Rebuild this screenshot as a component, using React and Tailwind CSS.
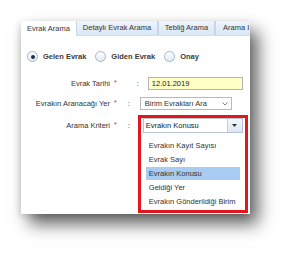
function Radio({ checked, label }) {
  return (
    <div className="flex items-center gap-[5px]">
      <span className="w-[11px] h-[11px] rounded-full border border-[#9fb6d3] bg-gradient-to-b from-white to-[#e3ebf5] flex items-center justify-center">
        {checked && <span className="w-[4px] h-[4px] rounded-full bg-[#1f2f4a]" />}
      </span>
      <span className="text-[#3a3a3a] font-semibold">{label}</span>
    </div>
  );
}

function Label({ text, colonGap }) {
  return (
    <div className="flex items-center">
      <span className="w-[89px] text-right text-[#333]">{text}</span>
      <span className="ml-[4px] text-[#e2141b] text-[7px] -mt-[3px]">*</span>
      <span className={`${colonGap} text-[#333]`}>:</span>
    </div>
  );
}

const options = [
  "Evrakın Kayıt Sayısı",
  "Evrak Sayı",
  "Evrakın Konusu",
  "Geldiği Yer",
  "Evrakın Gönderildiği Birim",
];

export default function App() {
  return (
    <div
      className="w-[294px] h-[256px] bg-white overflow-hidden pt-[21px] pl-[21px] text-[7.5px] leading-none"
      style={{ fontFamily: '"Liberation Sans", Arial, sans-serif' }}
    >
      <div className="w-[229px] h-[193px] bg-white overflow-hidden shadow-[8px_10px_16px_rgba(0,0,0,0.62),-2px_2px_6px_rgba(0,0,0,0.12)]">
        {/* Tabs */}
        <div className="flex h-[15px] whitespace-nowrap">
          <div className="w-[55px] shrink-0 bg-white flex items-center justify-center text-[#333]">
            Evrak Arama
          </div>
          <div className="w-[81px] shrink-0 bg-gradient-to-b from-[#eef4fb] to-[#dbe7f5] border-l border-[#c6d6ea] border-b border-b-[#d2deed] flex items-center justify-center text-[#333]">
            Detaylı Evrak Arama
          </div>
          <div className="w-[57px] shrink-0 bg-gradient-to-b from-[#eef4fb] to-[#dbe7f5] border-l-2 border-[#c6d6ea] border-b border-b-[#d2deed] flex items-center justify-center text-[#333]">
            Tebliğ Arama
          </div>
          <div className="w-[36px] shrink-0 overflow-hidden bg-gradient-to-b from-[#eef4fb] to-[#dbe7f5] border-l-2 border-[#c6d6ea] border-b border-b-[#d2deed] flex items-center pl-[7px] text-[#333]">
            Arama I
          </div>
        </div>

        {/* Radios */}
        <div className="flex items-center h-[11px] mt-[15px] pl-[6px] gap-[9px]">
          <Radio checked label="Gelen Evrak" />
          <Radio label="Giden Evrak" />
          <Radio label="Onay" />
        </div>

        {/* Form */}
        <div className="mt-[15px] flex flex-col">
          <div className="flex items-center h-[13px]">
            <Label text="Evrak Tarihi" colonGap="ml-[20px]" />
            <div className="ml-[9px] w-[95px] h-[13px] border border-[#b4b4b4] bg-[#ffffc6] flex items-center pl-[3px] text-[#222]">
              12.01.2019
            </div>
          </div>

          <div className="flex items-center h-[13px] mt-[7px]">
            <Label text="Evrakın Aranacağı Yer" colonGap="ml-[11px]" />
            <div className="ml-[10px] w-[92px] h-[13px] border border-[#b9b9b9] bg-white flex items-center justify-between pl-[4px] pr-[3px] text-[#333]">
              <span>Birim Evrakları Ara</span>
              <svg width="6" height="4" viewBox="0 0 6 4" fill="none" stroke="#666" strokeWidth="0.8">
                <path d="M0.5 0.5 L3 3 L5.5 0.5" />
              </svg>
            </div>
          </div>

          <div className="flex items-start mt-[5px]">
            <div className="h-[15px] mt-[3px] flex items-center">
              <Label text="Arama Kriteri" colonGap="ml-[11px]" />
            </div>
            <div className="ml-[8px] w-[110px] h-[98px] border-[3px] border-[#e3151d] bg-white flex flex-col">
              <div className="mx-[2px] h-[15px] border border-[#b7c4d4] flex">
                <div className="flex-1 flex items-center pl-[2px] text-[#222]">Evrakın Konusu</div>
                <div className="w-[15px] border-l border-[#c3cfdd] bg-gradient-to-b from-[#f4f8fc] to-[#dce6f2] flex items-center justify-center">
                  <svg width="5" height="3" viewBox="0 0 5 3">
                    <path d="M0 0 H5 L2.5 3 Z" fill="#333" />
                  </svg>
                </div>
              </div>
              <div className="mt-[6px] flex flex-col">
                {options.map((o) => (
                  <div
                    key={o}
                    className={`mx-[5px] h-[13px] mb-[1px] flex items-center pl-[3px] text-[#333] ${
                      o === "Evrakın Konusu" ? "bg-[#a9ccf2]" : ""
                    }`}
                  >
                    {o}
                  </div>
                ))}
              </div>
            </div>
          </div>
        </div>
      </div>
    </div>
  );
}
